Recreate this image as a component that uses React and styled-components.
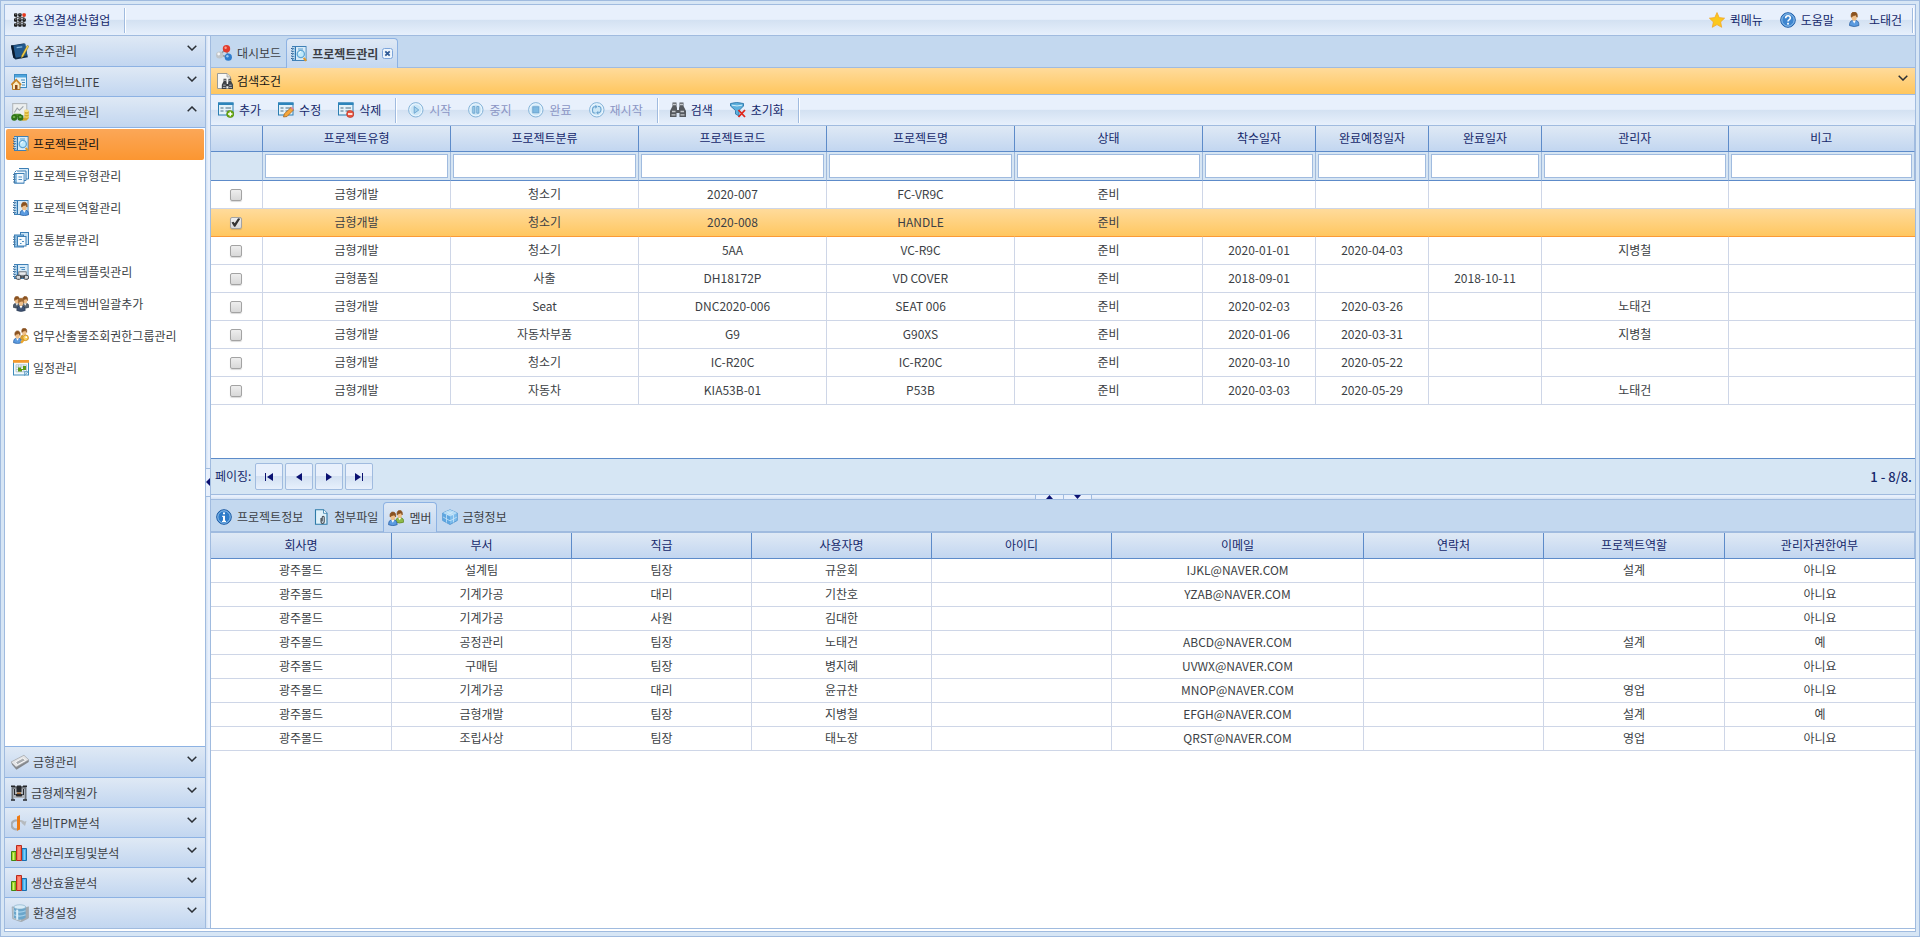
import React, { useState } from "react";
import styled, { createGlobalStyle, css } from "styled-components";

const line = "#a0bbdf";
const lineStrong = "#5d8bc9";
const navy = "#15286b";
const ink = "#3c3f45";
const barFill = "linear-gradient(to bottom, #dfe9f5, #c2d6f0)";
const toolFill = "linear-gradient(to bottom, #e8f0fc 0%, #e8f0fc 48%, #d3e1f2 50%, #e7f0fc 100%)";
const orangeFill = "linear-gradient(to bottom, #ffdb9b, #ffc65e)";

const GlobalStyle = createGlobalStyle`
  *, *::before, *::after { box-sizing: border-box; }
  body {
    margin: 0;
    background: #d7e6f5;
    color: ${ink};
    font-family: "Noto Sans CJK KR", "Noto Sans", sans-serif;
    font-size: 12px;
    line-height: 18px;
  }
  button, input { font: inherit; color: inherit; }
  button { cursor: pointer; margin: 0; }
  a { color: inherit; text-decoration: none; }
  svg { display: block; flex: none; }
`;

/* ---------- frame ---------- */
const Shell = styled.div`
  display: flex;
  min-height: 100vh;
  padding: 3px 3px 4px;
  border: 1px solid ${line};
  background: #d7e6f5;
`;
const Frame = styled.div`
  flex: 1;
  min-width: 0;
  display: flex;
  flex-direction: column;
  padding-bottom: 2px;
  border: 1px solid ${line};
  background: #fff;
`;
const Workspace = styled.div`
  flex: 1;
  display: flex;
  border-bottom: 1px solid ${line};
`;

/* ---------- tool bars ---------- */
const TopBar = styled.header`
  display: flex;
  align-items: center;
  height: 31px;
  border-bottom: 1px solid ${line};
  background: ${toolFill};
  color: ${navy};
`;
const ToolBar = styled.div`
  display: flex;
  align-items: center;
  gap: 3px;
  height: 31px;
  border-bottom: 1px solid ${line};
  background: ${toolFill};
  color: ${navy};
`;
const Spacer = styled.div`flex: 1;`;
const Separator = styled.i`
  width: 2px;
  height: 25px;
  margin: 0 1px 0 4px;
  border-left: 1px solid ${line};
  border-right: 1px solid #fff;
`;
const ToolButton = styled.button`
  display: flex;
  align-items: center;
  gap: 5px;
  height: 26px;
  padding: 0 ${(p) => p.$pad || 7}px;
  border: 0;
  background: none;
  white-space: nowrap;
  &:disabled { color: #8b95c4; cursor: default; }
`;
const BrandButton = styled(ToolButton)`
  padding: 0 10px 0 7px;
`;

/* ---------- side bar ---------- */
const Sidebar = styled.nav`
  flex: none;
  width: 201px;
  display: flex;
  flex-direction: column;
  border-right: 1px solid ${line};
`;
const SectionButton = styled.button`
  display: flex;
  align-items: center;
  gap: 4px;
  height: ${(p) => (p.$large ? 31 : 30)}px;
  padding: 0 8px 0 6px;
  border: 0;
  border-bottom: 1px solid #8db2e3;
  background: ${barFill};
  text-align: left;
  & > span { flex: 1; }
  &:last-child { height: 30px; border-bottom: 0; }
`;
const ChevronBox = styled.i`
  padding-bottom: 6px;
`;
const Menu = styled.div`
  flex: 1;
  display: flex;
  flex-direction: column;
  gap: 1px;
  padding: 1px;
  border-bottom: 1px solid #8db2e3;
  background: #fff;
`;
const MenuLink = styled.a`
  display: flex;
  align-items: center;
  gap: 4px;
  height: 31px;
  padding: 0 7px 2px;
  border-radius: 2px;
  ${(p) => p.$active && css`
    background: linear-gradient(to bottom, #fba758, #fb9631);
    color: #111;
  `}
`;

/* ---------- splitters ---------- */
const SplitterV = styled.div`
  flex: none;
  width: 5px;
  display: flex;
  flex-direction: column;
  justify-content: center;
  border-right: 1px solid ${line};
  background: linear-gradient(to right, #d3e1f2, #e8f0fc 60%);
`;
const SplitterH = styled.div`
  flex: none;
  height: 6px;
  display: flex;
  justify-content: center;
  border-top: 1px solid ${line};
  border-bottom: 1px solid ${line};
  background: linear-gradient(to bottom, #e8f0fc 40%, #d3e1f2);
`;
const HandleV = styled.button`
  display: flex;
  align-items: center;
  width: 4px;
  height: 29px;
  padding: 0;
  border: solid ${line};
  border-width: 1px 0;
  background: #e8f0fc;
`;
const HandleH = styled.button`
  display: flex;
  align-items: center;
  justify-content: center;
  width: 29px;
  height: 4px;
  margin-right: -1px;
  padding: 0;
  border: solid ${line};
  border-width: 0 1px;
  background: #e8f0fc;
`;

/* ---------- main panes ---------- */
const Main = styled.main`
  flex: 1;
  min-width: 0;
  display: flex;
  flex-direction: column;
`;
const TabBar = styled.div`
  display: flex;
  align-items: flex-end;
  height: ${(p) => p.$height}px;
  border-bottom: ${(p) => p.$rule}px solid ${line};
  background: #c3d8ef;
`;
const Tab = styled.div`
  display: flex;
  align-items: center;
  gap: 4px;
  height: 29px;
  padding: 0 5px;
  ${(p) => p.$active && css`
    height: 30px;
    margin-bottom: -1px;
    padding: 0 4px;
    border: 1px solid #8db2e3;
    border-bottom: 0;
    border-radius: 4px 4px 0 0;
    background: linear-gradient(to bottom, #dfe9f5, #c3d7f0);
  `}
`;
const TabButton = styled.button`
  display: flex;
  align-items: center;
  gap: 5px;
  padding: 0;
  border: 0;
  background: none;
  font-weight: ${(p) => (p.$bold ? 700 : 400)};
  white-space: nowrap;
`;
const CloseButton = styled.button`
  padding: 0;
  border: 0;
  background: none;
`;
const SearchHeader = styled.button`
  display: flex;
  align-items: center;
  gap: 4px;
  height: 27px;
  padding: 0 7px 0 6px;
  border: 0;
  border-bottom: 1px solid ${line};
  background: ${orangeFill};
  color: #111;
  text-align: left;
  & > span { flex: 1; }
`;
const GridBox = styled.div`
  min-height: 333px;
  border-bottom: 1px solid ${lineStrong};
  background: #fff;
`;
const Grid = styled.table`
  width: 100%;
  table-layout: fixed;
  border-collapse: separate;
  border-spacing: 0;
  text-align: center;
`;
const HeadCell = styled.th`
  height: 26px;
  padding: 0 0 1px;
  border-right: 1px solid ${lineStrong};
  border-bottom: 1px solid ${lineStrong};
  background: ${barFill};
  color: ${navy};
  font-weight: 400;
  &:last-child { border-right-color: ${line}; }
`;
const FilterCell = styled.td`
  height: 29px;
  padding: 2px;
  border-right: 1px solid #9fb9dc;
  border-bottom: 1px solid ${lineStrong};
  background: #d6e5f3;
`;
const FilterInput = styled.input`
  display: block;
  width: 100%;
  height: 24px;
  padding: 0 4px;
  border: 1px solid ${line};
  background: #fff;
`;
const Row = styled.tr`
  ${(p) => p.$selected && css`
    background: ${orangeFill};
    & > td { border-right-color: transparent; border-bottom-color: #fb9a37; }
  `}
`;
const Cell = styled.td`
  height: ${(p) => p.$height}px;
  padding: 0 0 2px;
  border-right: 1px solid #ced6e7;
  border-bottom: 1px solid #ced6e7;
  line-height: 16px;
  &:last-child { border-right: 0; }
`;
const CheckCell = styled(Cell)`
  padding: 0 2px 0 0;
`;
const Check = styled.input.attrs({ type: "checkbox" })`
  appearance: none;
  display: block;
  width: 12px;
  height: 12px;
  margin: 0 auto;
  border: 1px solid #a3a3a3;
  border-radius: 2px;
  background: linear-gradient(to bottom, #eee, #d8d8d8);
  box-shadow: 0 1px 1px rgba(0, 0, 0, 0.15);
  &:checked::before {
    content: "";
    display: block;
    width: 10px;
    height: 10px;
    background: #333;
    clip-path: polygon(10% 50%, 30% 42%, 42% 58%, 76% 8%, 98% 12%, 48% 92%, 36% 92%);
  }
`;
const Pager = styled.div`
  display: flex;
  align-items: center;
  gap: 2px;
  height: 35px;
  padding: 0 3px 0 4px;
  background: #d6e6f4;
  color: ${navy};
`;
const PagerLabel = styled.span`
  padding: 0 2px 2px 0;
`;
const PageButton = styled.button`
  display: flex;
  align-items: center;
  justify-content: center;
  width: 28px;
  height: 27px;
  padding: 0;
  border: 1px solid ${line};
  border-radius: 2px;
  background: ${toolFill};
`;
const PageCount = styled.span`
  margin-left: auto;
  font-size: 13px;
  font-weight: 500;
`;
const Detail = styled.section`
  flex: 1;
  background: #fff;
`;

/* ---------- icons ---------- */
const Svg = ({ size = 16, children }) => (
  <svg width={size} height={size} viewBox="0 0 16 16" aria-hidden="true">{children}</svg>
);
const Notebook = ({ children, size }) => (
  <Svg size={size}>
    <rect x="1.500" y=".5" width="13.500" height="14" fill="#8fc0e4" stroke="#3f80b6" />
    <rect x="5" y="1" width="9.500" height="13" fill="#d8ebf8" />
    <path d="M4.500 1v13" stroke="#2f74ad" />
    <path d="M0 2.500h3M0 5h3M0 7.500h3M0 10h3M0 12.500h3" stroke="#2e6596" strokeWidth="1.200" />
    <path d="M1 1.800h2.500M1 4.300h2.500M1 6.800h2.500M1 9.300h2.500M1 11.800h2.500" stroke="#f4f9fd" strokeWidth=".8" />
    {children}
  </Svg>
);
const Person = ({ x = 0, y = 0, s = 1, body = "#5b9be0", hair = "#8a5220", edge = "#23589c" }) => (
  <g transform={`translate(${x} ${y}) scale(${s})`}>
    <path d="M.5 13.500Q.5 9 3.200 8.600h3.600Q9.500 9 9.500 13.500Q5 15.500.5 13.500z" fill={body} stroke={edge} strokeWidth=".7" />
    <path d="M3.400 8.600L5 11.500l1.600-2.900z" fill="#fff" />
    <rect x="2.600" y="2.500" width="4.800" height="6.300" rx="2.200" fill="#f0c08a" />
    <path d="M2.200 5.500Q1.500.5 5 .5T7.800 5.500Q7.200 3.600 6.200 3.400Q3.400 3.900 2.200 5.500z" fill={hair} stroke={hair} strokeWidth=".8" />
  </g>
);
const DotsIcon = () => (
  <Svg>
    <path d="M4 3l1 11M8 3v11M12 3l-.5 11M4 5.500h8M4 10.500h8" stroke="#6b6b6b" strokeWidth="1.200" />
    {[3, 8, 13].map((y) => [3.800, 8, 12.200].map((x) => (
      <rect key={`${x}-${y}`} x={x - 1.800} y={y - 1.800} width="3.400" height="3.600" rx="1" fill={x === 12.200 && y === 3 ? "#e8381c" : "#1c1c1c"} />
    )))}
    <path d="M3 2.200h1.500M7.200 2.200h1.500M3 7.200h1.500M7.200 7.200h1.500M11.500 7.200H13M3 12.200h1.500M7.200 12.200h1.500M11.500 12.200H13" stroke="#9a9a9a" strokeWidth=".8" />
  </Svg>
);
const BookIcon = () => (
  <Svg size={18}>
    <path d="M0 3L12 1l3 12.500L4 15.500 2 14z" fill="#102e4c" />
    <path d="M2 3L12.800 1.500 14.500 12 4 14z" fill="#22598d" />
    <path d="M0 3h2l2 11.500-2-.7z" fill="#0a1a2c" />
    <path d="M5 5l5-.7" stroke="#86b7de" strokeWidth="1.200" />
    <path d="M14.300 3L9.400 12l-.4 2.400 1.900-1.500L15.900 3.700z" fill="#f5d24a" stroke="#7e641b" strokeWidth=".4" />
  </Svg>
);
const HomeIcon = () => (
  <Svg>
    <rect x="3.500" y=".5" width="12" height="13" fill="#e4f3fb" stroke="#3b8bc4" />
    <rect x="4" y="1" width="11" height="2.500" fill="#4da4dc" />
    <path d="M10 6h4M11 8.500h3M11 11h3" stroke="#3f86ba" />
    <path d="M1.500 10v5.500h7.500V10L5.200 6.200z" fill="#fbe9bd" stroke="#b77a24" />
    <path d="M.3 10.900L5.200 5.800l4.900 5.100" fill="none" stroke="#c98426" strokeWidth="1.700" />
    <rect x="4" y="11" width="2.500" height="4.500" fill="#8a4a18" />
  </Svg>
);
const FinanceIcon = () => (
  <Svg size={18}>
    <rect x="1.500" y=".5" width="12.500" height="11" fill="#ecefef" stroke="#b3b9bd" />
    <path d="M3 8.500l2.500-4 2 2L11 3" fill="none" stroke="#9ba3ab" />
    <path d="M12 7h3.800v6.500l-2 2-4 .3.500-2.800h1.700z" fill="#d3aa2c" />
    <ellipse cx="13.700" cy="7" rx="2.100" ry="1.200" fill="#f7e08a" />
    <path d="M11.800 9.500q2.300 1.200 4 0M11.800 12q2.300 1.200 4 0" stroke="#f6dc6a" fill="none" />
    <rect x="2" y="9.500" width="7" height="3" rx="1" fill="#4c8f2a" />
    <circle cx="2.900" cy="13" r="2.700" fill="#2f7318" /><circle cx="8.300" cy="13" r="2.700" fill="#2f7318" />
    <path d="M1.700 12.500h2M7.300 12.500h2" stroke="#7fc24f" strokeWidth="1.300" />
  </Svg>
);
const ProjectIcon = () => (
  <Notebook>
    <path d="M7 3h5" stroke="#5aa0d0" />
    <circle cx="9.800" cy="8" r="3.600" fill="#bfe9fb" stroke="#5fa6d4" strokeWidth="1.300" />
    <path d="M8 7.500q.5-1.700 2-2" fill="none" stroke="#fff" />
    <path d="M12.800 11.800l2.200 3.200" stroke="#e09a2b" strokeWidth="2.200" />
  </Notebook>
);
const StackIcon = () => (
  <Svg>
    <path d="M6 .5h9.500v10.500H13" fill="#d7eaf8" stroke="#3d7fb5" />
    <path d="M4 3h9v9.500h-2.500" fill="#eaf5fc" stroke="#3d7fb5" />
    <path d="M1.500 4.500l2-2M1.500 15h9.500" stroke="#3d7fb5" />
    <rect x="1.500" y="5.500" width="9.500" height="9.500" fill="#8fc0e4" stroke="#3d7fb5" />
    <rect x="4" y="6" width="6.500" height="8.500" fill="#f2f8fd" />
    <path d="M0 6.500h2.500M0 9h2.500M0 11.500h2.500M0 14h2.500" stroke="#4f7ba0" />
    <path d="M5.500 9h3.500M5.500 11.500h3.500" stroke="#4d8fc3" />
  </Svg>
);
const RoleIcon = () => <Notebook><Person x={6.500} y={1.800} s={0.96} /></Notebook>;
const CategoryIcon = () => (
  <Svg>
    <rect x="7.500" y=".5" width="8" height="12" fill="#c9e3f5" stroke="#3d7fb5" />
    <rect x="1.500" y="3" width="9" height="12" fill="#8fc0e4" stroke="#3d7fb5" />
    <rect x="4.500" y="4.500" width="8.500" height="9.500" fill="#f5fafd" stroke="#3d7fb5" />
    <path d="M0 5h2.500M0 7.500h2.500M0 10h2.500M0 12.500h2.500" stroke="#4f7ba0" />
    <path d="M6.500 7.500h2M9 9.500h2M7 11.500h1.500" stroke="#4d8fc3" />
  </Svg>
);
const TemplateIcon = () => (
  <Notebook>
    <path d="M7 3.500h5M8.500 5.500H12" stroke="#4d8fc3" />
    <rect x="5.800" y="7.800" width="7.400" height="3.500" fill="#e9ebee" stroke="#555b62" strokeWidth=".8" />
    <rect x="3" y="11.300" width="5" height="4" rx="1.500" fill="#d6d9dd" stroke="#3b4046" />
    <rect x="10.800" y="11.300" width="4.700" height="4" rx="1.500" fill="#d6d9dd" stroke="#3b4046" />
    <path d="M7 13h5" stroke="#3b4046" strokeWidth="1.600" />
  </Notebook>
);
const GroupIcon = () => (
  <Svg>
    <Person x={-0.300} y={0} s={0.84} body="#4f5d6d" edge="#333d49" />
    <Person x={8} y={0} s={0.84} body="#5d6670" edge="#333d49" />
    <Person x={3.300} y={1.800} s={0.94} body="#3f5374" edge="#263750" hair="#a06a34" />
  </Svg>
);
const KeyGroupIcon = () => (
  <Svg>
    <Person x={7} y={-0.300} s={0.85} body="#e2a632" edge="#a8741a" />
    <Person x={0} y={2.500} s={0.9} />
    <path d="M11.500 11L8 14.800" stroke="#eca62a" strokeWidth="2.400" />
    <circle cx="12.600" cy="9.800" r="2.800" fill="#fbd15e" stroke="#c9861c" strokeWidth=".8" />
    <circle cx="13.200" cy="9.200" r=".9" fill="#fff" />
  </Svg>
);
const CalendarIcon = () => (
  <Svg>
    <rect x=".5" y=".5" width="15" height="14.500" fill="#f4f9fc" stroke="#3f8cbb" />
    <rect x="0" y="0" width="16" height="2.800" fill="#f39a2e" />
    <path d="M3 4.800h10.500v7H3zM3 7h10.500M3 9.500h10.500M5.500 4.800v7M8 4.800v7M10.800 4.800v7" fill="none" stroke="#a9bcc9" strokeWidth=".8" />
    <path d="M5 7.500h3v1.500h2V6h3v4H9v1.500H5z" fill="#5a9a16" />
    <path d="M11.500 15.500v-4h4z" fill="#b9d7ea" stroke="#3f8cbb" strokeWidth=".6" />
  </Svg>
);
const MoldIcon = () => (
  <Svg size={18}>
    <path d="M0 8L11.500 2 15.800 6v2L4.800 14.800 1 10.500z" fill="#85888c" />
    <path d="M0 8L11.500 2 15.800 6 4.500 12.500z" fill="#e3e4e6" stroke="#a2a5a9" strokeWidth=".5" />
    <path d="M4 8l6.500-3.500L13 6.500l-7.500 4z" fill="#a9adb1" stroke="#fafafa" strokeWidth=".8" />
  </Svg>
);
const MachineIcon = () => (
  <Svg>
    <path d="M.5 1h15v13.500h-2V4h-11v10.500h-2z" fill="#6d7278" />
    <rect x="2.500" y="3.500" width="11" height="9.500" fill="#b0b4b9" />
    <path d="M0 1.200h4M6 1.200h4M12 1.200h4M0 15h4M12 15h4" stroke="#24272b" strokeWidth="1.600" />
    <path d="M5.500 2h5v5h-5zM4 9h8l-1.500 2.500h-5zM3 4h1v6H3zM12 4h1v6h-1z" fill="#26282c" />
    <rect x="6" y="7.500" width="4" height="1.600" fill="#a3682f" />
  </Svg>
);
const TpmIcon = () => (
  <Svg>
    <path d="M6 5.500A4.500 4.500 0 1 0 7 14" fill="none" stroke="#a9adb2" strokeWidth="2.200" />
    <path d="M9 6q3-.5 4 2" fill="none" stroke="#b6babe" strokeWidth="2" />
    <path d="M10 7.500L15.500 6l-1.500 5z" fill="#b6babe" />
    <path d="M6 1.500L9 0v14.500l-3 1.200z" fill="#ee7b14" />
  </Svg>
);
const BarsIcon = () => (
  <Svg>
    <path d="M.5 15.500V6.500h4.500v9z" fill="#a3d62b" stroke="#3f8a10" />
    <path d="M11 15.500v-12h4.500v12z" fill="#48b2ee" stroke="#1a6fae" />
    <path d="M5.500 15.500V.5h5v15z" fill="#fb6f57" stroke="#b92a1d" />
    <path d="M8 2v13" stroke="#ffa594" /><path d="M2.500 8v7" stroke="#d2f07a" /><path d="M13.300 5v10" stroke="#8ed5fb" />
  </Svg>
);
const ServerIcon = () => (
  <Svg size={18}>
    <path d="M1 2.500L9 5l6.500-2.500v10L9 15.800 1.500 13z" fill="#c3c9cf" stroke="#8d979f" strokeWidth=".5" />
    <path d="M9 5l6.500-2.500v10L9 15.800z" fill="#a4aab0" />
    <path d="M2.500 2.500v9.800Q8 15.800 13 12.300V2.500z" fill="#6ba6cb" />
    <ellipse cx="7.800" cy="2.600" rx="5.300" ry="1.900" fill="#d9ecf7" stroke="#7aa7c2" strokeWidth=".5" />
    <path d="M2.500 6q5 2.500 10.500 0M2.500 9.500q5 2.500 10.500 0" fill="none" stroke="#a8d2ec" />
    <path d="M5.500 5v9" stroke="#dceffa" strokeWidth="1.800" />
  </Svg>
);
const StarIcon = () => (
  <Svg>
    <path d="M8 .6l2.200 5 5.400.6-4 3.700 1.100 5.400L8 12.600l-4.700 2.700 1.100-5.400-4-3.700 5.400-.6z" fill="#fbc81d" stroke="#f3a72c" strokeWidth=".8" />
  </Svg>
);
const HelpIcon = () => (
  <Svg>
    <circle cx="8" cy="8" r="7.300" fill="#3d85cf" stroke="#1f5da8" strokeWidth="1" />
    <circle cx="8" cy="8" r="6.200" fill="none" stroke="#a8d0f2" strokeWidth=".8" />
    <path d="M5.600 6.200Q5.800 3.800 8 3.800T10.400 6Q10.400 7 9 7.900Q8 8.500 8 9.600" fill="none" stroke="#fff" strokeWidth="1.600" />
    <rect x="7.100" y="10.800" width="1.800" height="1.800" fill="#fff" />
  </Svg>
);
const UserIcon = () => <Svg><Person x={1} y={-0.500} s={1.040} /></Svg>;
const DashboardIcon = () => (
  <Svg>
    <path d="M3.500 10L10 4l2.500 8z" fill="none" stroke="#8d959c" strokeWidth="1.500" />
    <circle cx="10.500" cy="3.800" r="3.700" fill="#e23a2b" /><circle cx="9.600" cy="2.700" r="1.200" fill="#f8a092" />
    <circle cx="3.600" cy="10" r="3.600" fill="#c0c5ca" /><circle cx="2.700" cy="9" r="1.400" fill="#f5f6f7" />
    <circle cx="12.300" cy="12.200" r="3.600" fill="#2f7ccc" /><circle cx="11.400" cy="11.200" r="1.200" fill="#9ccbf3" />
  </Svg>
);
const Bino = ({ c = "#55595e" }) => (
  <>
    <path d="M2.500.5h4v3.500L7 6v2h2V6l.5-2V.5h4v3.500l2.500 5v6H9.500v-4h-3v4H0V9l2.500-5z" fill={c} />
    <path d="M3 2.500h3M10 2.500h3M2 9.500h3.500M10.500 9.500H14M1.500 12.800h4M10.500 12.800h4" stroke="#c3c6c9" strokeWidth="1.300" />
  </>
);
const SearchPageIcon = () => (
  <Svg>
    <path d="M.5.5h9.500l3.500 3.500v11.500H.5z" fill="#f8f8f6" stroke="#9b9b96" />
    <path d="M10 .5V4h3.500" fill="#ddd" stroke="#9b9b96" strokeWidth=".7" />
    <g transform="translate(4.800 5.500) scale(.7)"><Bino c="#3f4246" /></g>
  </Svg>
);
const BinoIcon = () => <Svg><Bino /></Svg>;
const FormIcon = ({ badge }) => (
  <Svg>
    <rect x=".5" y="1" width="14.500" height="12" fill="#e4f2fa" stroke="#2c7eb2" />
    <rect x="0" y=".5" width="15.500" height="2.500" fill="#2c84bb" />
    <path d="M2.500 6h3M7.500 6h5.500M2.500 9h3M7.500 9h4" stroke="#7e99aa" strokeWidth="1.400" />
    {badge === "edit" && <path d="M5.500 15l.8-3.200L13 5.500l2.500 2.500-6.500 6.500z" fill="#f4a63c" stroke="#9d5d14" strokeWidth=".7" />}
    {badge === "edit" && <path d="M12.500 6l1.200-1.200 2 2L14.800 8z" fill="#e2849a" />}
    {badge === "add" && <><circle cx="12.200" cy="12" r="3.600" fill="#6cab10" stroke="#468006" strokeWidth=".6" /><path d="M12.200 9.800v4.400M10 12h4.400" stroke="#fff" strokeWidth="1.400" /></>}
    {badge === "remove" && <><circle cx="12.200" cy="12" r="3.600" fill="#e8543f" stroke="#b32a1a" strokeWidth=".6" /><path d="M10 12h4.400" stroke="#fff" strokeWidth="1.600" /></>}
  </Svg>
);
const Round = ({ children }) => (
  <Svg>
    <circle cx="7.800" cy="7.800" r="7.200" fill="#e6f3fd" stroke="#84b3d8" strokeWidth="1" />
    <circle cx="7.800" cy="7.800" r="5.400" fill="#cbe6f6" />
    {children}
  </Svg>
);
const PlayIcon = () => <Round><path d="M6.200 4.500v6.800L10.800 8z" fill="#a4d2ec" stroke="#6ba3cf" strokeWidth=".9" /></Round>;
const PauseIcon = () => <Round><path d="M4.800 4.500h2v6.700h-2zM8.800 4.500h2v6.700h-2z" fill="#a4d2ec" stroke="#6ba3cf" strokeWidth=".9" /></Round>;
const StopIcon = () => <Round><rect x="4.800" y="4.800" width="6" height="6" fill="#7fbae2" stroke="#6ba3cf" strokeWidth=".9" /></Round>;
const RestartIcon = () => (
  <Round>
    <path d="M6.500 11H5Q3.500 11 3.500 8T5.500 4.800h1.500M9 4.500h1.500Q12 5 12 7.500T10 10.800H8.500" fill="none" stroke="#6ba3cf" strokeWidth="1.100" />
    <path d="M6.300 2.800v4L8.500 4.800zM9.300 8.800v4L7.100 10.800z" fill="#6ba3cf" />
  </Round>
);
const ResetIcon = () => (
  <Svg>
    <path d="M.5 1.500Q6.500-.5 13.500 1.500V4L9 8.500V14L5.500 12V8.500L.5 4z" fill="#5eb0dd" stroke="#2c76aa" strokeWidth=".9" />
    <path d="M2 3.200q5 1.500 10 0" fill="none" stroke="#d3edf9" />
    <path d="M8.500 8l6.500 7M15 8l-6.500 7" stroke="#df2418" strokeWidth="1.800" />
  </Svg>
);
const InfoIcon = () => (
  <Svg>
    <circle cx="8" cy="8" r="7.300" fill="#2f7cc9" stroke="#1b59a2" />
    <circle cx="8" cy="8" r="6.200" fill="none" stroke="#a8d0f2" strokeWidth=".8" />
    <path d="M7 3.500h2v1.800H7zM6.200 6.700H9v5h1v1.200H6v-1.200h1V8h-.8z" fill="#fff" />
  </Svg>
);
const AttachIcon = () => (
  <Svg>
    <path d="M2.500.8H10.500L14 4.200v11H2.500z" fill="#dff1fa" stroke="#2e7ba8" strokeWidth="1.100" />
    <path d="M10.500.8v3.500H14" fill="#fff" stroke="#2e7ba8" strokeWidth=".8" />
    <path d="M8 9v3.800q0 1.700 1.600 1.700t1.600-1.700V8.500q0-1.300-1-1.300t-1 1.300v4" fill="none" stroke="#454b52" strokeWidth="1.100" />
  </Svg>
);
const MemberIcon = () => (
  <Svg>
    <Person x={7.200} y={0} s={0.9} body="#8fba4a" edge="#567f1c" />
    <Person x={0} y={1.600} s={0.97} />
  </Svg>
);
const CubeIcon = () => (
  <Svg>
    <path d="M8 .8l7.300 3.200v7.500L8 15.500.7 11.500V4z" fill="#7cbcec" stroke="#4a90cb" strokeWidth=".8" />
    <path d="M8 .8l7.300 3.200-7.300 3.500L.7 4z" fill="#b5dcf6" /><path d="M8 7.500V15.500L.7 11.500V4z" fill="#5ea6e0" />
    <path d="M4.500 2.500l7 3.500M11.500 2.500L4.500 6M1 8l7 3.800L15 8M4.500 6v7.500M11.500 6v7.500" fill="none" stroke="#d3ebfa" strokeWidth=".7" />
  </Svg>
);
const CloseIcon = () => (
  <svg width="11" height="11" viewBox="0 0 11 11" aria-hidden="true">
    <rect x=".5" y=".5" width="10" height="10" rx="2" fill="#eef5fc" stroke="#7da5da" />
    <path d="M3.300 3.300l4.400 4.400M7.700 3.300L3.300 7.700" stroke="#2f5a95" strokeWidth="1.800" />
  </svg>
);
const Chevron = ({ up }) => (
  <svg width="10" height="6" viewBox="0 0 10 6" aria-hidden="true">
    <path d={up ? "M.7 5.300L5 1l4.300 4.300" : "M.7.7L5 5 9.300.7"} fill="none" stroke="#2b3036" strokeWidth="1.500" />
  </svg>
);
const pagerShapes = {
  first: "M1 0h1v8H1zM9 0v8L3 4z",
  prev: "M8 0v8L2 4z",
  next: "M2 0v8l6-4z",
  last: "M8 0h1v8H8zM1 0v8l6-4z",
};
const Arrow = ({ kind }) => (
  <svg width="10" height="8" viewBox="0 0 10 8" aria-hidden="true"><path d={pagerShapes[kind]} fill="#0a1172" /></svg>
);

/* ---------- data ---------- */
const upperSections = [
  { label: "수주관리", icon: <BookIcon />, large: true },
  { label: "협업허브LITE", icon: <HomeIcon /> },
  { label: "프로젝트관리", icon: <FinanceIcon />, large: true, open: true },
];
const lowerSections = [
  { label: "금형관리", icon: <MoldIcon />, large: true },
  { label: "금형제작원가", icon: <MachineIcon /> },
  { label: "설비TPM분석", icon: <TpmIcon /> },
  { label: "생산리포팅및분석", icon: <BarsIcon /> },
  { label: "생산효율분석", icon: <BarsIcon /> },
  { label: "환경설정", icon: <ServerIcon />, large: true },
];
const menuItems = [
  ["프로젝트관리", <ProjectIcon />],
  ["프로젝트유형관리", <StackIcon />],
  ["프로젝트역할관리", <RoleIcon />],
  ["공통분류관리", <CategoryIcon />],
  ["프로젝트템플릿관리", <TemplateIcon />],
  ["프로젝트멤버일괄추가", <GroupIcon />],
  ["업무산출물조회권한그룹관리", <KeyGroupIcon />],
  ["일정관리", <CalendarIcon />],
];
const projectColumns = [
  ["프로젝트유형", 188], ["프로젝트분류", 188], ["프로젝트코드", 188], ["프로젝트명", 188], ["상태", 188],
  ["착수일자", 113], ["완료예정일자", 113], ["완료일자", 113], ["관리자"], ["비고"],
];
const projects = [
  ["금형개발", "청소기", "2020-007", "FC-VR9C", "준비", "", "", "", "", ""],
  ["금형개발", "청소기", "2020-008", "HANDLE", "준비", "", "", "", "", ""],
  ["금형개발", "청소기", "5AA", "VC-R9C", "준비", "2020-01-01", "2020-04-03", "", "지병철", ""],
  ["금형품질", "사출", "DH18172P", "VD COVER", "준비", "2018-09-01", "", "2018-10-11", "", ""],
  ["금형개발", "Seat", "DNC2020-006", "SEAT 006", "준비", "2020-02-03", "2020-03-26", "", "노태건", ""],
  ["금형개발", "자동차부품", "G9", "G90XS", "준비", "2020-01-06", "2020-03-31", "", "지병철", ""],
  ["금형개발", "청소기", "IC-R20C", "IC-R20C", "준비", "2020-03-10", "2020-05-22", "", "", ""],
  ["금형개발", "자동차", "KIA53B-01", "P53B", "준비", "2020-03-03", "2020-05-29", "", "노태건", ""],
];
const memberColumns = [
  ["회사명", 181], ["부서"], ["직급"], ["사용자명"], ["아이디"], ["이메일", 252], ["연락처"], ["프로젝트역할", 181], ["관리자권한여부", 190],
];
const members = [
  ["광주몰드", "설계팀", "팀장", "규윤회", "", "IJKL@NAVER.COM", "", "설계", "아니요"],
  ["광주몰드", "기계가공", "대리", "기찬호", "", "YZAB@NAVER.COM", "", "", "아니요"],
  ["광주몰드", "기계가공", "사원", "김대한", "", "", "", "", "아니요"],
  ["광주몰드", "공정관리", "팀장", "노태건", "", "ABCD@NAVER.COM", "", "설계", "예"],
  ["광주몰드", "구매팀", "팀장", "병지혜", "", "UVWX@NAVER.COM", "", "", "아니요"],
  ["광주몰드", "기계가공", "대리", "윤규찬", "", "MNOP@NAVER.COM", "", "영업", "아니요"],
  ["광주몰드", "금형개발", "팀장", "지병철", "", "EFGH@NAVER.COM", "", "설계", "예"],
  ["광주몰드", "조립사상", "팀장", "태노장", "", "QRST@NAVER.COM", "", "영업", "아니요"],
];
const pageButtons = [["first", "첫 페이지"], ["prev", "이전 페이지"], ["next", "다음 페이지"], ["last", "마지막 페이지"]];

const Section = ({ label, icon, large, open }) => (
  <SectionButton type="button" $large={large} aria-expanded={!!open}>
    {icon}
    <span>{label}</span>
    <ChevronBox><Chevron up={open} /></ChevronBox>
  </SectionButton>
);

const Tool = ({ icon, label, ...rest }) => (
  <ToolButton type="button" {...rest}>{icon}{label}</ToolButton>
);

function ProjectGrid() {
  const [checked, setChecked] = useState([1]);
  const toggle = (i) => setChecked((c) => (c.includes(i) ? c.filter((n) => n !== i) : [...c, i]));
  return (
    <Grid>
      <colgroup>
        <col width="52" />
        {projectColumns.map(([name, width]) => <col key={name} width={width} />)}
      </colgroup>
      <thead>
        <tr>
          <HeadCell aria-label="선택" />
          {projectColumns.map(([name]) => <HeadCell key={name} scope="col">{name}</HeadCell>)}
        </tr>
        <tr>
          <FilterCell />
          {projectColumns.map(([name]) => (
            <FilterCell key={name}><FilterInput type="text" aria-label={name} /></FilterCell>
          ))}
        </tr>
      </thead>
      <tbody>
        {projects.map((row, i) => (
          <Row key={row[2]} $selected={checked.includes(i)}>
            <CheckCell $height={28}>
              <Check checked={checked.includes(i)} onChange={() => toggle(i)} aria-label={row[2]} />
            </CheckCell>
            {row.map((value, n) => <Cell key={n} $height={28}>{value}</Cell>)}
          </Row>
        ))}
      </tbody>
    </Grid>
  );
}

function MemberGrid() {
  return (
    <Grid>
      <colgroup>{memberColumns.map(([name, width]) => <col key={name} width={width} />)}</colgroup>
      <thead>
        <tr>{memberColumns.map(([name]) => <HeadCell key={name} scope="col">{name}</HeadCell>)}</tr>
      </thead>
      <tbody>
        {members.map((row) => (
          <Row key={row[3]}>{row.map((value, n) => <Cell key={n} $height={24}>{value}</Cell>)}</Row>
        ))}
      </tbody>
    </Grid>
  );
}

export default function App() {
  return (
    <>
      <GlobalStyle />
      <Shell>
        <Frame>
          <TopBar>
            <BrandButton type="button"><DotsIcon />초연결생산협업</BrandButton>
            <Separator />
            <Spacer />
            <Tool icon={<StarIcon />} label="퀵메뉴" $pad={9} />
            <Tool icon={<HelpIcon />} label="도움말" $pad={8} />
            <Tool icon={<UserIcon />} label="노태건" $pad={6} />
            <Separator />
          </TopBar>
          <Workspace>
            <Sidebar>
              {upperSections.map((s) => <Section key={s.label} {...s} />)}
              <Menu>
                {menuItems.map(([label, icon], i) => (
                  <MenuLink key={label} href="#" $active={i === 0}>{icon}{label}</MenuLink>
                ))}
              </Menu>
              {lowerSections.map((s) => <Section key={s.label} {...s} />)}
            </Sidebar>
            <SplitterV>
              <HandleV type="button" aria-label="메뉴 접기">
                <svg width="4" height="8" viewBox="0 0 4 8" aria-hidden="true"><path d="M4 0v8L0 4z" fill="#0a1172" /></svg>
              </HandleV>
            </SplitterV>
            <Main>
              <TabBar $height={32} $rule={1}>
                <Tab><TabButton type="button"><DashboardIcon />대시보드</TabButton></Tab>
                <Tab $active>
                  <TabButton type="button" $bold><ProjectIcon />프로젝트관리</TabButton>
                  <CloseButton type="button" aria-label="닫기"><CloseIcon /></CloseButton>
                </Tab>
              </TabBar>
              <SearchHeader type="button">
                <SearchPageIcon />
                <span>검색조건</span>
                <ChevronBox><Chevron /></ChevronBox>
              </SearchHeader>
              <ToolBar>
                <Tool icon={<FormIcon badge="add" />} label="추가" />
                <Tool icon={<FormIcon badge="edit" />} label="수정" />
                <Tool icon={<FormIcon badge="remove" />} label="삭제" />
                <Separator />
                <Tool icon={<PlayIcon />} label="시작" disabled />
                <Tool icon={<PauseIcon />} label="중지" disabled />
                <Tool icon={<StopIcon />} label="완료" disabled />
                <Tool icon={<RestartIcon />} label="재시작" disabled />
                <Separator />
                <Tool icon={<BinoIcon />} label="검색" />
                <Tool icon={<ResetIcon />} label="초기화" />
                <Separator />
              </ToolBar>
              <GridBox><ProjectGrid /></GridBox>
              <Pager>
                <PagerLabel>페이징:</PagerLabel>
                {pageButtons.map(([kind, label]) => (
                  <PageButton key={kind} type="button" aria-label={label}><Arrow kind={kind} /></PageButton>
                ))}
                <PageCount>1 - 8/8.</PageCount>
              </Pager>
              <SplitterH>
                <HandleH type="button" aria-label="위로">
                  <svg width="7" height="4" viewBox="0 0 7 4" aria-hidden="true"><path d="M0 4h7L3.500 0z" fill="#0a1172" /></svg>
                </HandleH>
                <HandleH type="button" aria-label="아래로">
                  <svg width="7" height="4" viewBox="0 0 7 4" aria-hidden="true"><path d="M0 0h7L3.500 4z" fill="#0a1172" /></svg>
                </HandleH>
              </SplitterH>
              <Detail>
                <TabBar $height={33} $rule={2}>
                  <Tab><TabButton type="button"><InfoIcon />프로젝트정보</TabButton></Tab>
                  <Tab><TabButton type="button"><AttachIcon />첨부파일</TabButton></Tab>
                  <Tab $active><TabButton type="button"><MemberIcon />멤버</TabButton></Tab>
                  <Tab><TabButton type="button"><CubeIcon />금형정보</TabButton></Tab>
                </TabBar>
                <MemberGrid />
              </Detail>
            </Main>
          </Workspace>
        </Frame>
      </Shell>
    </>
  );
}
